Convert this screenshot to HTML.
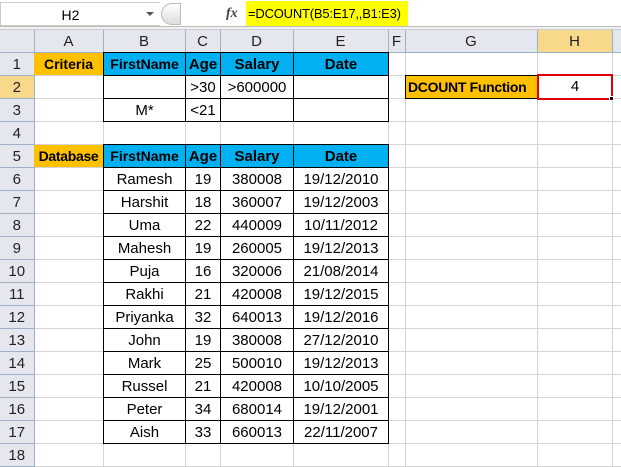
<!DOCTYPE html>
<html><head><style>
body{margin:0;width:621px;height:466px;overflow:hidden;background:#fff;font-family:"Liberation Sans",sans-serif;position:relative}
.a{position:absolute;box-sizing:border-box}
table{border-collapse:collapse;position:absolute;table-layout:fixed}
td{padding:0;height:22px;text-align:center;font-size:15px;white-space:nowrap;overflow:hidden}
.g td{border-right:1px solid #D4D4D4;border-bottom:1px solid #D4D4D4}
.g td.h{background:#E4E8EE;border-color:#9EB0C6;color:#222;font-size:15px}
.g td.hs{background:#F8D88A;border-color:#9EB0C6}
.k td{border:1px solid #000}
.bl td{background:#00B0F0;font-weight:bold}
</style></head><body>
<div class="a" style="left:0;top:0;width:621px;height:27px;border-bottom:1px solid #bbb;background:#fff"></div>
<div class="a" style="left:0;top:27px;width:621px;height:3px;background:#f1f1f1;border-bottom:1px solid #ccc"></div>
<div class="a" style="left:0;top:2px;width:160px;height:24px;border:1px solid #ccc;border-right:none;font-size:14px;text-align:center;line-height:24px;padding-right:20px">H2</div>
<div class="a" style="left:146px;top:12px;width:0;height:0;border-left:4px solid transparent;border-right:4px solid transparent;border-top:4px solid #555"></div>
<div class="a" style="left:161px;top:3px;width:20px;height:22px;border-radius:11px 0 0 11px;border:1px solid #bbb;background:linear-gradient(#fff,#ddd)"></div>
<div class="a" style="left:226px;top:6px;font:italic bold 14px 'Liberation Serif',serif;color:#444">fx</div>
<div class="a" style="left:246px;top:1px;width:162px;height:25px;background:#FFFF00;font-size:13px;line-height:25px;padding-left:2px;white-space:nowrap;letter-spacing:-0.2px">=DCOUNT(B5:E17,,B1:E3)</div>

<table class="g" style="left:0;top:30px;width:632px">
<colgroup><col style="width:34px"><col style="width:69px"><col style="width:82px"><col style="width:35px"><col style="width:73px"><col style="width:95px"><col style="width:17px"><col style="width:132px"><col style="width:75px"><col style="width:20px"></colgroup>
<tr><td class="h"></td><td class="h">A</td><td class="h">B</td><td class="h">C</td><td class="h">D</td><td class="h">E</td><td class="h">F</td><td class="h">G</td><td class="h hs">H</td><td class="h"></td></tr>
<tr><td class="h">1</td><td></td><td></td><td></td><td></td><td></td><td></td><td></td><td></td><td></td></tr>
<tr><td class="h hs">2</td><td></td><td></td><td></td><td></td><td></td><td></td><td></td><td></td><td></td></tr>
<tr><td class="h">3</td><td></td><td></td><td></td><td></td><td></td><td></td><td></td><td></td><td></td></tr>
<tr><td class="h">4</td><td></td><td></td><td></td><td></td><td></td><td></td><td></td><td></td><td></td></tr>
<tr><td class="h">5</td><td></td><td></td><td></td><td></td><td></td><td></td><td></td><td></td><td></td></tr>
<tr><td class="h">6</td><td></td><td></td><td></td><td></td><td></td><td></td><td></td><td></td><td></td></tr>
<tr><td class="h">7</td><td></td><td></td><td></td><td></td><td></td><td></td><td></td><td></td><td></td></tr>
<tr><td class="h">8</td><td></td><td></td><td></td><td></td><td></td><td></td><td></td><td></td><td></td></tr>
<tr><td class="h">9</td><td></td><td></td><td></td><td></td><td></td><td></td><td></td><td></td><td></td></tr>
<tr><td class="h">10</td><td></td><td></td><td></td><td></td><td></td><td></td><td></td><td></td><td></td></tr>
<tr><td class="h">11</td><td></td><td></td><td></td><td></td><td></td><td></td><td></td><td></td><td></td></tr>
<tr><td class="h">12</td><td></td><td></td><td></td><td></td><td></td><td></td><td></td><td></td><td></td></tr>
<tr><td class="h">13</td><td></td><td></td><td></td><td></td><td></td><td></td><td></td><td></td><td></td></tr>
<tr><td class="h">14</td><td></td><td></td><td></td><td></td><td></td><td></td><td></td><td></td><td></td></tr>
<tr><td class="h">15</td><td></td><td></td><td></td><td></td><td></td><td></td><td></td><td></td><td></td></tr>
<tr><td class="h">16</td><td></td><td></td><td></td><td></td><td></td><td></td><td></td><td></td><td></td></tr>
<tr><td class="h">17</td><td></td><td></td><td></td><td></td><td></td><td></td><td></td><td></td><td></td></tr>
<tr><td class="h">18</td><td></td><td></td><td></td><td></td><td></td><td></td><td></td><td></td><td></td></tr>
</table>

<div class="a" style="left:34px;top:53px;width:69px;height:22px;background:#FFC000;font-weight:bold;font-size:14px;text-align:center;line-height:22px">Criteria</div>
<div class="a" style="left:34px;top:145px;width:69px;height:22px;background:#FFC000;font-weight:bold;font-size:14px;text-align:center;line-height:22px;letter-spacing:-0.3px">Database</div>

<table class="k" style="left:103px;top:52px;width:286px">
<colgroup><col style="width:82px"><col style="width:35px"><col style="width:73px"><col style="width:95px"></colgroup>
<tr class="bl"><td style="font-size:14px">FirstName</td><td>Age</td><td>Salary</td><td>Date</td></tr>
<tr><td></td><td>&gt;30</td><td>&gt;600000</td><td></td></tr>
<tr><td>M*</td><td>&lt;21</td><td></td><td></td></tr>
</table>

<table class="k" style="left:103px;top:144px;width:286px">
<colgroup><col style="width:82px"><col style="width:35px"><col style="width:73px"><col style="width:95px"></colgroup>
<tr class="bl"><td style="font-size:14px">FirstName</td><td>Age</td><td>Salary</td><td>Date</td></tr>
<tr><td>Ramesh</td><td>19</td><td>380008</td><td>19/12/2010</td></tr>
<tr><td>Harshit</td><td>18</td><td>360007</td><td>19/12/2003</td></tr>
<tr><td>Uma</td><td>22</td><td>440009</td><td>10/11/2012</td></tr>
<tr><td>Mahesh</td><td>19</td><td>260005</td><td>19/12/2013</td></tr>
<tr><td>Puja</td><td>16</td><td>320006</td><td>21/08/2014</td></tr>
<tr><td>Rakhi</td><td>21</td><td>420008</td><td>19/12/2015</td></tr>
<tr><td>Priyanka</td><td>32</td><td>640013</td><td>19/12/2016</td></tr>
<tr><td>John</td><td>19</td><td>380008</td><td>27/12/2010</td></tr>
<tr><td>Mark</td><td>25</td><td>500010</td><td>19/12/2013</td></tr>
<tr><td>Russel</td><td>21</td><td>420008</td><td>10/10/2005</td></tr>
<tr><td>Peter</td><td>34</td><td>680014</td><td>19/12/2001</td></tr>
<tr><td>Aish</td><td>33</td><td>660013</td><td>22/11/2007</td></tr>
</table>

<div class="a" style="left:405px;top:75px;width:133px;height:24px;background:#FFC000;border:1px solid #000;font-weight:bold;font-size:14px;line-height:22px;padding-left:2px;letter-spacing:-0.3px;white-space:nowrap">DCOUNT Function</div>
<div class="a" style="left:537px;top:74px;width:76px;height:26px;border:2px solid #E00000;background:#fff;font-size:15px;text-align:center;line-height:22px">4</div>
<div class="a" style="left:609px;top:96px;width:5px;height:5px;background:#000;border:1px solid #fff"></div>
</body></html>
